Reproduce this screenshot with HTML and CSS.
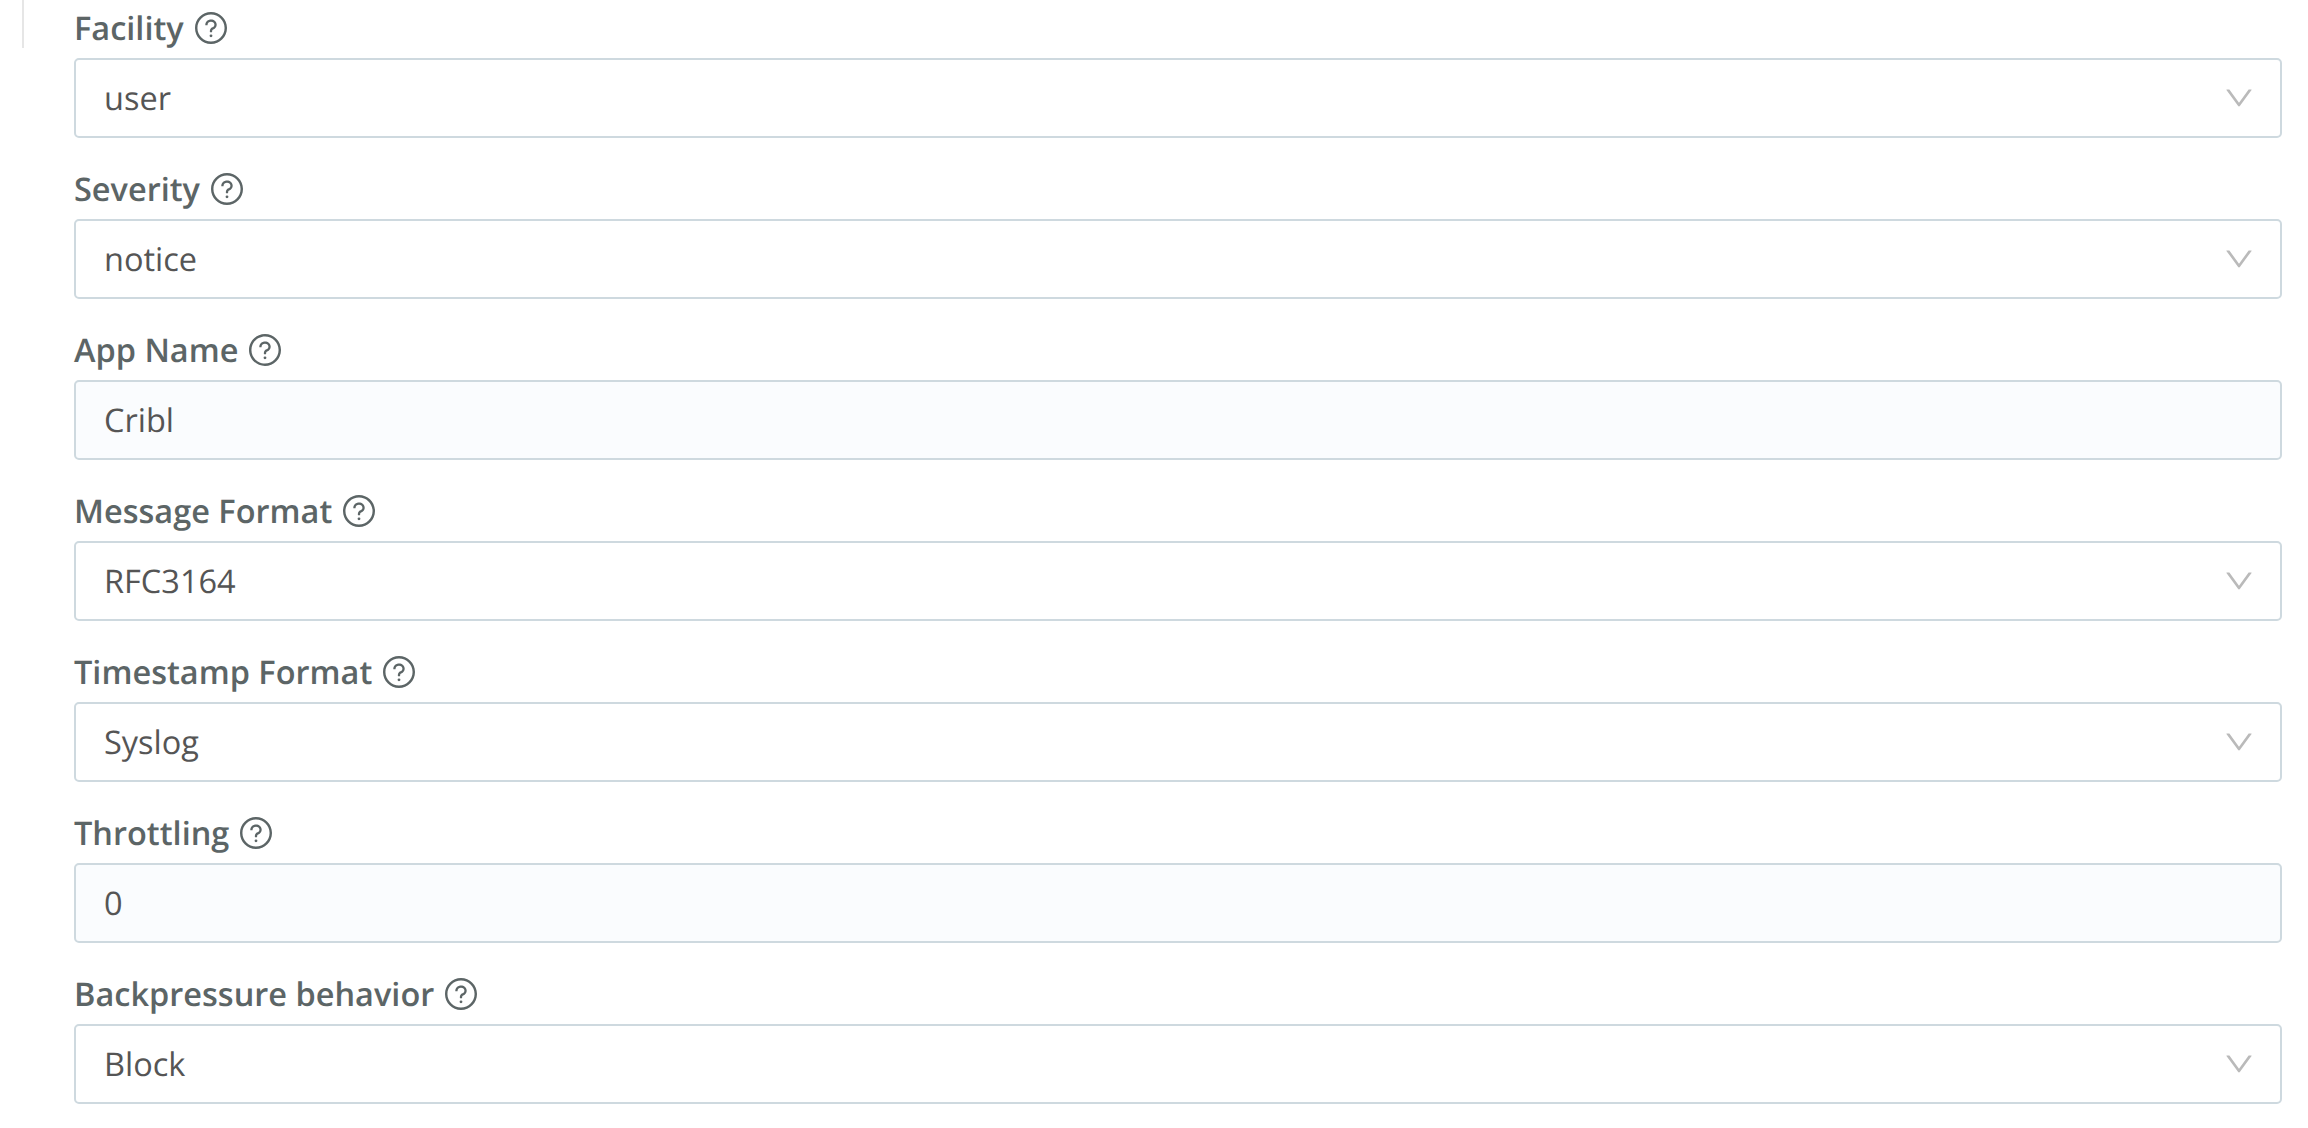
FILE: index.html
```
<!DOCTYPE html>
<html lang="en">
<head>
  <meta charset="UTF-8">
  <meta name="viewport" content="width=device-width, initial-scale=1.0">
  <title>Syslog Settings</title>
  <link rel="stylesheet" href="styles.css">
</head>
<body>
  <!-- Shared icons -->
  <svg class="icon-defs" width="0" height="0">
    <symbol id="icon-help" viewBox="64 64 896 896">
      <path d="M512 64C264.600 64 64 264.600 64 512s200.600 448 448 448 448-200.600 448-448S759.400 64 512 64zm0 828c-209.900 0-380-170.100-380-380s170.100-380 380-380 380 170.100 380 380-170.100 380-380 380z"/>
      <path d="M623.600 316.700C593.600 290.400 554 276 512 276s-81.600 14.500-111.600 40.700C369.200 344 352 380.700 352 420v7.600c0 4.400 3.600 8 8 8h48c4.400 0 8-3.600 8-8V420c0-44.100 43.100-80 96-80s96 35.900 96 80c0 31.100-22 59.600-56.100 72.700-21.200 8.100-39.200 22.300-52.100 40.900-13.100 19-19.900 41.800-19.900 64.900V620c0 4.400 3.600 8 8 8h48c4.400 0 8-3.600 8-8v-22.700a48.300 48.300 0 0 1 30.900-44.800c59-22.700 97.100-74.700 97.100-132.500.1-39.300-17.100-76-48.300-103.300zM472 732a40 40 0 1 0 80 0 40 40 0 1 0-80 0z"/>
    </symbol>
    <symbol id="icon-down" viewBox="0 0 1024 1024">
      <path d="M884 256h-75c-5.100 0-9.900 2.500-12.900 6.600L512 654.200 227.900 262.600c-3-4.100-7.800-6.600-12.900-6.600h-75c-6.500 0-10.300 7.400-6.500 12.700l352.600 486.100c12.800 17.600 39 17.600 51.700 0l352.600-486.100c3.900-5.300.1-12.700-6.400-12.700z"/>
    </symbol>
  </svg>

  <main class="settings">
    <div class="divider"></div>

    <form class="fields">
      <div class="field">
        <div class="label">Facility <svg class="help"><use href="#icon-help"/></svg></div>
        <div class="control"><span>user</span><svg class="arrow"><use href="#icon-down"/></svg></div>
      </div>
      <div class="field">
        <div class="label">Severity <svg class="help"><use href="#icon-help"/></svg></div>
        <div class="control"><span>notice</span><svg class="arrow"><use href="#icon-down"/></svg></div>
      </div>
      <div class="field">
        <div class="label">App Name <svg class="help"><use href="#icon-help"/></svg></div>
        <div class="control input"><span>Cribl</span></div>
      </div>
      <div class="field">
        <div class="label">Message Format <svg class="help"><use href="#icon-help"/></svg></div>
        <div class="control"><span>RFC3164</span><svg class="arrow"><use href="#icon-down"/></svg></div>
      </div>
      <div class="field">
        <div class="label">Timestamp Format <svg class="help"><use href="#icon-help"/></svg></div>
        <div class="control"><span>Syslog</span><svg class="arrow"><use href="#icon-down"/></svg></div>
      </div>
      <div class="field">
        <div class="label">Throttling <svg class="help"><use href="#icon-help"/></svg></div>
        <div class="control input"><span>0</span></div>
      </div>
      <div class="field">
        <div class="label">Backpressure behavior <svg class="help"><use href="#icon-help"/></svg></div>
        <div class="control"><span>Block</span><svg class="arrow"><use href="#icon-down"/></svg></div>
      </div>
    </form>
  </main>
</body>
</html>
```
FILE: styles.css
```
:root {
  --border: #ced9df;
  --label: #5c6566;
  --text: #555555;
  --arrow: #bababa;
  --input-bg: #fafcfe;
}

* { margin: 0; padding: 0; box-sizing: border-box; }
body {
  font-family: 'Open Sans', sans-serif;
  font-size: 32.5px;
  text-rendering: geometricPrecision;
  background: #fff;
  color: var(--text);
  overflow: hidden;
}
.icon-defs { display: block; }

.settings { display: flex; align-items: flex-start; padding: 0 26px 0 22px; }
.divider { width: 2px; height: 48px; background: #e6e6e6; margin-right: 50px; }
.fields { flex: 1; }

.field { margin-bottom: 23px; }
.label {
  display: flex;
  align-items: center;
  gap: 11px;
  height: 58px;
  padding-bottom: 3px;
  font-weight: 600;
  color: var(--label);
}
.help { width: 32px; height: 32px; fill: currentColor; }

/* Selects and inputs share the same box */
.control {
  display: flex;
  align-items: center;
  justify-content: space-between;
  height: 80px;
  padding: 0 24px 0 28px;
  border: 2px solid var(--border);
  border-radius: 5px;
}
.control span { padding-bottom: 1px; }
.control.input { background: var(--input-bg); }
.arrow { width: 34px; height: 34px; fill: var(--arrow); }
```
